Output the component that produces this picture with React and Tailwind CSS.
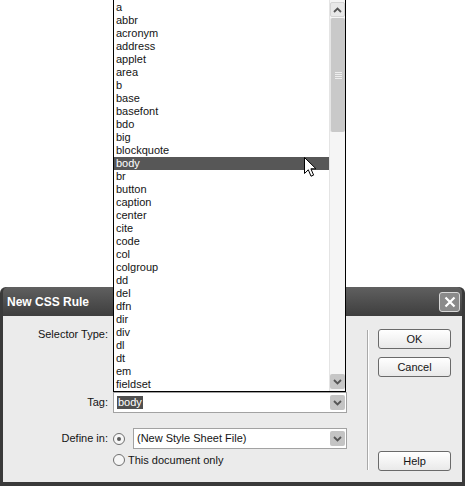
import React from "react";

const TAGS = [
  "a", "abbr", "acronym", "address", "applet", "area", "b", "base", "basefont", "bdo",
  "big", "blockquote", "body", "br", "button", "caption", "center", "cite", "code", "col",
  "colgroup", "dd", "del", "dfn", "dir", "div", "dl", "dt", "em", "fieldset",
];

function Chevron({ up = false }) {
  return (
    <svg width="9" height="6" viewBox="0 0 9 6">
      <path
        d={up ? "M1 5 L4.5 1.5 L8 5" : "M1 1 L4.5 4.5 L8 1"}
        fill="none"
        stroke="#555"
        strokeWidth="1.8"
      />
    </svg>
  );
}

function ArrowButton() {
  return (
    <div className="flex h-[15px] w-[15px] items-center justify-center rounded-[2px] bg-[#c4c4c4]">
      <Chevron />
    </div>
  );
}

function Radio({ checked }) {
  return (
    <div className="flex h-[12px] w-[12px] items-center justify-center rounded-full border border-[#6f6f6f] bg-[#f6f6f6]">
      {checked && <div className="h-[4px] w-[4px] rounded-full bg-[#5a5a5a]" />}
    </div>
  );
}

function Button({ children, className = "" }) {
  return (
    <div
      className={
        "flex h-[20px] items-center justify-center rounded-[3px] border border-[#6a6a6a] bg-linear-to-b from-white to-[#e9e9e9] " +
        className
      }
    >
      {children}
    </div>
  );
}

function TagList() {
  return (
    <div className="absolute left-[113px] top-0 flex h-[392px] w-[233px] border-x border-b border-black bg-white">
      <div className="flex-1 pt-[1px]">
        {TAGS.map((t) => (
          <div
            key={t}
            className={
              t === "body"
                ? "h-[13px] bg-[#575757] pl-[2px] leading-[13px] text-white"
                : "h-[13px] pl-[2px] leading-[13px]"
            }
          >
            {t}
          </div>
        ))}
      </div>
      {/* scrollbar */}
      <div className="flex w-[16px] flex-col border-l border-[#e4e4e4] bg-[#f5f5f5] pb-[2px] pt-[2px]">
        <div className="flex h-[15px] items-center justify-center rounded-[2px] border border-[#d4d4d4] bg-[#e8e8e8]">
          <Chevron up />
        </div>
        <div className="mt-[1px] flex h-[114px] items-center justify-center rounded-[2px] border-l border-[#e6e6e6] bg-[#c9c9c9]">
          <div className="flex flex-col gap-[1px]">
            <div className="h-[1px] w-[7px] bg-[#eeeeee]" />
            <div className="h-[1px] w-[7px] bg-[#eeeeee]" />
            <div className="h-[1px] w-[7px] bg-[#eeeeee]" />
            <div className="h-[1px] w-[7px] bg-[#eeeeee]" />
          </div>
        </div>
        <div className="flex-1" />
        <div className="flex h-[15px] items-center justify-center rounded-[2px] bg-[#c6c6c6]">
          <Chevron />
        </div>
      </div>
    </div>
  );
}

function Dialog() {
  return (
    <div className="flex h-[199px] flex-col rounded-t-[6px] bg-[#3a3a3a] px-[3px] pb-[4px]">
      {/* title bar */}
      <div className="flex h-[29px] items-center justify-between rounded-t-[5px] bg-linear-to-b from-[#606060] to-[#3e3e3e] pl-[4px] pr-[2px]">
        <span className="text-[12px] font-bold text-white">New CSS Rule</span>
        <div className="mt-[1px] flex h-[20px] w-[21px] items-center justify-center rounded-[3px] border border-[#d8d8d8] bg-[#8a8a8a]">
          <svg width="12" height="12" viewBox="0 0 12 12">
            <path d="M1.5 1.5 L10.5 10.5 M10.5 1.5 L1.5 10.5" stroke="white" strokeWidth="2.2" />
          </svg>
        </div>
      </div>

      {/* body */}
      <div className="flex flex-1 bg-[#ebebeb]">
        <div className="flex w-[344px] flex-col">
          <div className="mt-[11px] flex h-[14px] items-center">
            <span className="w-[105px] text-right">Selector Type:</span>
          </div>

          <div className="mt-[51px] flex h-[21px] items-center">
            <span className="w-[105px] text-right">Tag:</span>
            <div className="ml-[5px] flex h-[21px] w-[234px] items-center justify-between border border-[#a2a2a2] bg-white pl-[3px] pr-[1px]">
              <span className="bg-[#4f4f4f] px-[1px] leading-[13px] text-white">body</span>
              <ArrowButton />
            </div>
          </div>

          <div className="mt-[15px] flex h-[21px] items-center">
            <span className="w-[105px] text-right">Define in:</span>
            <div className="ml-[5px]">
              <Radio checked />
            </div>
            <div className="ml-[8px] flex h-[21px] w-[214px] items-center justify-between border border-[#a2a2a2] bg-white pl-[3px] pr-[1px]">
              <span>(New Style Sheet File)</span>
              <ArrowButton />
            </div>
          </div>

          <div className="mt-[4px] flex h-[14px] items-center pl-[110px]">
            <Radio />
            <span className="ml-[3px]">This document only</span>
          </div>
        </div>

        <div className="ml-[20px] mt-[14px] h-[140px] w-[2px] border-l border-r border-l-[#a9a9a9] border-r-white" />

        <div className="ml-[9px] flex w-[73px] flex-col">
          <Button className="mt-[13px]">OK</Button>
          <Button className="mt-[8px]">Cancel</Button>
          <Button className="mt-[74px]">Help</Button>
        </div>
      </div>
    </div>
  );
}

export default function App() {
  return (
    <div className="relative h-[486px] w-[465px] overflow-hidden bg-white font-['Liberation_Sans',Arial,sans-serif] text-[11px] text-[#141414]">
      <div className="pt-[287px]">
        <Dialog />
      </div>
      <TagList />
      {/* mouse pointer */}
      <svg className="absolute left-[304px] top-[157px]" width="13" height="21" viewBox="0 0 13 21">
        <path
          d="M0.5 0.5 L0.5 16.5 L4.3 12.8 L7 19.2 L9.6 18.1 L6.9 11.8 L12 11.8 Z"
          fill="white"
          stroke="black"
          strokeWidth="1"
        />
      </svg>
    </div>
  );
}
